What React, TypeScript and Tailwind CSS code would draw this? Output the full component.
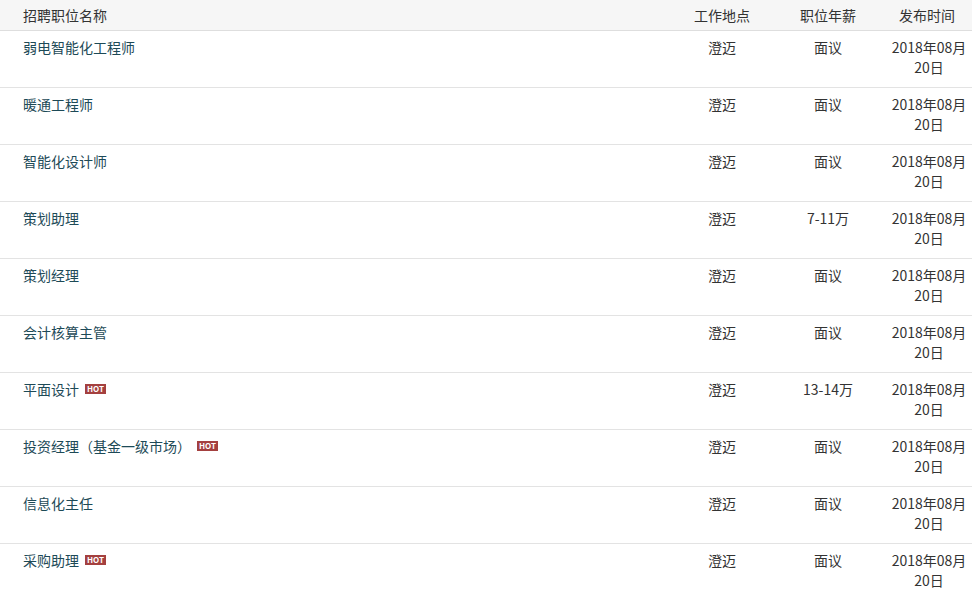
const jobs = [
  { name: "弱电智能化工程师", salary: "面议" },
  { name: "暖通工程师", salary: "面议" },
  { name: "智能化设计师", salary: "面议" },
  { name: "策划助理", salary: "7-11万" },
  { name: "策划经理", salary: "面议" },
  { name: "会计核算主管", salary: "面议" },
  { name: "平面设计", salary: "13-14万", hot: true },
  { name: "投资经理（基金一级市场）", salary: "面议", hot: true },
  { name: "信息化主任", salary: "面议" },
  { name: "采购助理", salary: "面议", hot: true },
]

const font = { fontFamily: '"Noto Sans CJK SC", "Noto Sans", sans-serif' }

function Hot() {
  return (
    <span className="ml-[6px] inline-flex h-[10px] items-center bg-[#a4403f] px-[2px] text-[8px] font-bold leading-none text-white">
      HOT
    </span>
  )
}

export default function App() {
  return (
    <div className="w-[972px] h-[595px] overflow-hidden bg-white text-[14px] text-[#333]" style={font}>
      <div className="grid grid-cols-[670px_104px_108px_90px] h-[31px] items-center bg-[#f6f6f6] border-b border-[#dedede]">
        <div className="pl-[23px]">招聘职位名称</div>
        <div className="text-center">工作地点</div>
        <div className="text-center">职位年薪</div>
        <div className="text-center">发布时间</div>
      </div>

      {jobs.map((job) => (
        <div
          key={job.name}
          className="grid grid-cols-[670px_104px_108px_90px] h-[57px] border-b border-[#e3e3e3] pt-[6px] leading-[20px]"
        >
          <div className="pl-[23px] flex items-center h-[20px] text-[#1d4a57]">
            {job.name}
            {job.hot && <Hot />}
          </div>
          <div className="text-center">澄迈</div>
          <div className="text-center">{job.salary}</div>
          <div className="text-center pl-[4px]">
            <div>2018年08月</div>
            <div>20日</div>
          </div>
        </div>
      ))}
    </div>
  )
}
